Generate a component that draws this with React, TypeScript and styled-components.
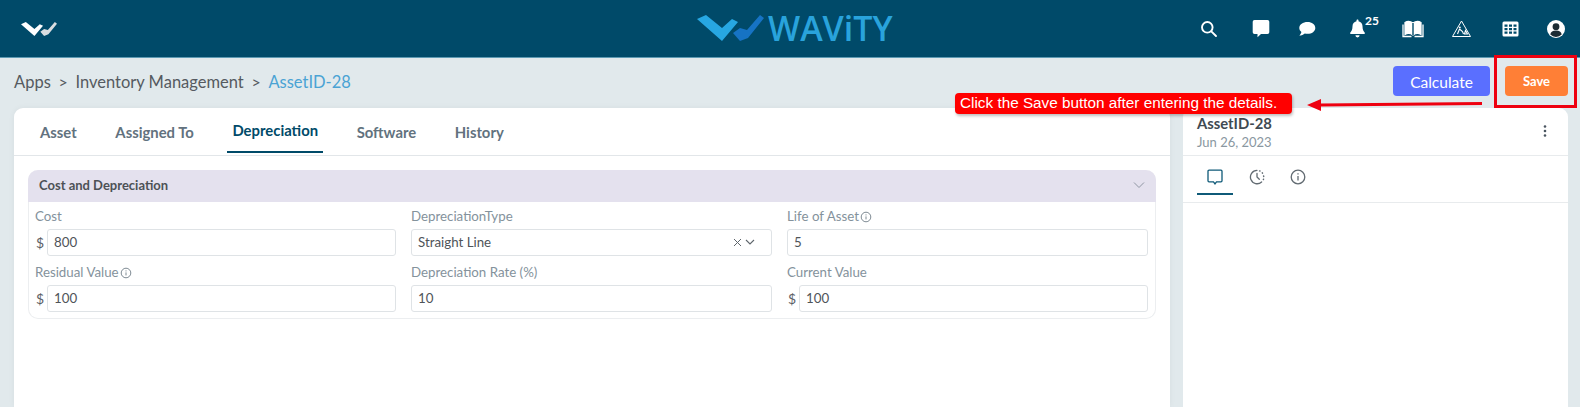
import React from "react";
import styled, { createGlobalStyle } from "styled-components";

const Global = createGlobalStyle`
  html, body { margin: 0; padding: 0; height: 100%; overflow: hidden; }
  body { background: #e1e9ec; font-family: Lato, "Open Sans", sans-serif; color: #4a4f55; }
  #root { height: 407px; }
`;

const Page = styled.div`
  position: relative;
  width: 1580px;
  height: 407px;
  overflow: hidden;
  display: flex;
  flex-direction: column;
`;

const Header = styled.header`
  flex: 0 0 58px;
  box-sizing: border-box;
  background: #004a69;
  border-bottom: 1px solid #5d9ab3;
  display: flex;
  align-items: center;
  padding: 0 0 0 21px;
  position: relative;
`;

const LogoCenter = styled.div`
  position: absolute;
  left: 697px;
  top: 15px;
  display: flex;
  align-items: center;
  gap: 4px;
  height: 26px;
`;

const LogoWord = styled.span`
  font-family: "Open Sans", sans-serif;
  font-size: 34px;
  font-weight: 600;
  line-height: 26px;
  color: #29a3dc;
`;

const HeaderIcons = styled.nav`
  margin-left: auto;
  display: flex;
  align-items: center;
`;

const IconSlot = styled.span<{ $w: number }>`
  position: relative;
  width: ${(p) => p.$w}px;
  display: flex;
  justify-content: center;
  align-items: center;
  height: 28px;
`;

const Badge = styled.span`
  position: absolute;
  left: 43px;
  top: -1px;
  font-size: 12px;
  line-height: 14px;
  font-weight: 700;
  color: #fff;
`;

const SubBar = styled.div`
  flex: 0 0 50px;
  display: flex;
  align-items: center;
  padding: 0 12px 4px 14px;
  box-sizing: border-box;
`;

const Crumbs = styled.div`
  display: flex;
  align-items: center;
  padding-top: 1px;
  font-size: 16.500px;
  color: #555a60;
`;

const Sep = styled.span`
  margin: 0 7.700px;
  font-size: 16px;
`;

const Current = styled.span`
  color: #4aa3d4;
`;

const Actions = styled.div`
  margin-left: auto;
  display: flex;
  gap: 15px;
`;

const Button = styled.button<{ $bg: string; $w: number; $bold?: boolean; $size: number; $pt: number }>`
  width: ${(p) => p.$w}px;
  height: 30px;
  border: 0;
  border-radius: 4px;
  background: ${(p) => p.$bg};
  color: #fff;
  font-family: Lato, sans-serif;
  font-size: ${(p) => p.$size}px;
  font-weight: ${(p) => (p.$bold ? 700 : 400)};
  padding: ${(p) => p.$pt}px 0 0;
`;

const Body = styled.div`
  flex: 1;
  display: flex;
  padding: 0 12px 0 14px;
  gap: 13px;
  min-height: 0;
`;

const MainCard = styled.section`
  flex: 0 0 1156px;
  background: #fff;
  border-radius: 9px 9px 0 0;
  box-shadow: 0 0 6px rgba(0, 0, 0, 0.05);
`;

const Tabs = styled.div`
  height: 48px;
  box-sizing: border-box;
  border-bottom: 1px solid #e2e6e9;
  display: flex;
  padding-left: 21px;
  gap: 28.600px;
`;

const Tab = styled.div<{ $active?: boolean }>`
  display: flex;
  align-items: center;
  height: 45px;
  box-sizing: border-box;
  padding: 3px 5px ${(p) => (p.$active ? "2px" : "0")};
  font-size: 14.850px;
  font-weight: 700;
  color: ${(p) => (p.$active ? "#004a69" : "#62727e")};
  border-bottom: ${(p) => (p.$active ? "2px solid #004a69" : "0")};
`;

const Accordion = styled.div`
  margin: 14px 14px 0 14px;
  border: 1px solid #eceef0;
  border-top: 0;
  border-radius: 10px;
  height: 149px;
  box-sizing: border-box;
`;

const AccordionHead = styled.div`
  height: 32px;
  margin: 0 -1px;
  background: #e4e1ee;
  border-radius: 10px 10px 0 0;
  display: flex;
  align-items: center;
  justify-content: space-between;
  padding: 0 11px 2px 11px;
  box-sizing: border-box;
  font-size: 13px;
  font-weight: 700;
  color: #4d5156;
`;

const Grid = styled.div`
  display: grid;
  grid-template-columns: repeat(3, 361px);
  column-gap: 15px;
  row-gap: 7px;
  padding: 5px 0 0 6px;
`;

const Field = styled.div`
  display: flex;
  flex-direction: column;
`;

const Label = styled.label`
  font-size: 13.300px;
  line-height: 19px;
  height: 22px;
  color: #84929c;
  display: flex;
  align-items: flex-start;
  gap: 1px;
`;

const InfoWrap = styled.span`
  display: flex;
  margin-top: 4px;
`;

const InputRow = styled.div`
  display: flex;
  align-items: center;
`;

const Dollar = styled.span`
  width: 12px;
  padding-left: 1px;
  box-sizing: border-box;
  font-size: 14px;
  color: #5b6066;
`;

const Input = styled.div`
  flex: 1;
  height: 27px;
  box-sizing: border-box;
  border: 1px solid #dfe3e6;
  border-radius: 3px;
  padding: 0 5px 1px 6px;
  font-size: 13.300px;
  color: #4f5459;
  display: flex;
  align-items: center;
`;

const SelectTools = styled.span`
  margin-left: auto;
  display: flex;
  align-items: center;
  gap: 3px;
  margin-right: 11px;
`;

const Side = styled.aside`
  flex: 1;
  background: #fff;
  border-radius: 9px 9px 0 0;
  display: flex;
  flex-direction: column;
`;

const SideHead = styled.div`
  height: 48px;
  box-sizing: border-box;
  padding: 6px 0 0 14px;
  border-bottom: 1px solid #e8ebed;
  position: relative;
`;

const SideTitle = styled.div`
  font-size: 14.800px;
  font-weight: 700;
  line-height: 18px;
  color: #3f4a52;
`;

const SideDate = styled.div`
  font-size: 13px;
  line-height: 20px;
  color: #8a97a1;
`;

const Kebab = styled.span`
  position: absolute;
  right: 21px;
  top: 17px;
  display: flex;
`;

const SideTabs = styled.div`
  height: 47px;
  box-sizing: border-box;
  border-bottom: 1px solid #e8ebed;
  padding-left: 14px;
  display: flex;
  gap: 5.500px;
`;

const SideTab = styled.div<{ $active?: boolean }>`
  width: 36px;
  height: 39px;
  display: flex;
  align-items: center;
  justify-content: center;
  padding-top: 5px;
  box-sizing: border-box;
  border-bottom: ${(p) => (p.$active ? "2px solid #0f5a78" : "2px solid transparent")};
`;

const Note = styled.div`
  position: absolute;
  left: 955px;
  top: 93px;
  width: 337px;
  height: 21px;
  box-sizing: border-box;
  background: #ff0000;
  border-radius: 4px;
  box-shadow: 1px 2px 3px rgba(0, 0, 0, 0.25);
  color: #fff;
  font-family: "Liberation Sans", Arial, sans-serif;
  font-size: 15.300px;
  line-height: 20px;
  padding-left: 5px;
  white-space: nowrap;
`;

const Highlight = styled.div`
  position: absolute;
  left: 1494px;
  top: 55px;
  width: 83px;
  height: 53px;
  box-sizing: border-box;
  border: 3px solid #ee0010;
`;

const ArrowSvg = styled.svg`
  position: absolute;
  left: 1304px;
  top: 95px;
`;

const Info = () => (
  <InfoWrap>
    <svg width="12" height="12" viewBox="0 0 12 12" fill="none" stroke="#6f7d87" strokeWidth="0.9">
      <circle cx="6" cy="6" r="4.800" />
      <path d="M6 5.400v3M6 3.400v1" />
    </svg>
  </InfoWrap>
);

const Check = ({ a, b, w, h }: { a: string; b: string; w: number; h: number }) => (
  <svg width={w} height={h} viewBox="0 0 67 26">
    <path d="M0 4 L9 0 L25 13 L35 4 L41 7 L25 26 Z" fill={a} />
    <path d="M36 18 L43 13 L50 15 L63 0 L67 3 L51 23 L43 26 Z" fill={b} />
  </svg>
);

const W = "#fff";

const iconsTop = [
  <svg key="s" width="18" height="18" viewBox="0 0 18 18" fill="none" stroke={W} strokeWidth="1.900"><circle cx="7.300" cy="7.300" r="5.300" /><path d="M11.300 11.300 16 16" strokeLinecap="round" /></svg>,
  <svg key="c" width="18" height="19" viewBox="0 0 18 19" fill={W}><path d="M2.500 1h13A1.800 1.800 0 0 1 17.300 2.800v10.400A1.800 1.800 0 0 1 15.500 15H9l-3.500 3.200V15h-3A1.800 1.800 0 0 1 .7 13.200V2.800A1.800 1.800 0 0 1 2.500 1Z" /></svg>,
  <svg key="m" width="18" height="16" viewBox="0 0 18 16" fill={W}><path d="M9.500 1C13.900 1 17.300 3.500 17.300 6.900S13.900 12.800 9.500 12.800c-1 0-1.900-.1-2.700-.4C5.500 13.500 3.500 14.600 1.200 14.600c1-.9 1.900-2.200 2.200-3.700C2 9.800 1.300 8.400 1.300 6.900 1.300 3.500 5 1 9.500 1Z" /></svg>,
  <svg key="b" width="15" height="19" viewBox="0 0 15 19" fill={W}><path d="M7.500 .5c.6 0 1 .4 1 1v.7c2.500.5 4 2.600 4 5.100 0 3.700 1 4.900 2.300 6.400.3.500.1 1.300-.7 1.300H.9c-.8 0-1-.8-.7-1.300C1.500 12.200 2.500 11 2.500 7.300c0-2.500 1.500-4.600 4-5.100v-.7c0-.6.400-1 1-1Z" /><path d="M5.400 16.300h4.200a2.100 2.100 0 0 1-4.200 0Z" /></svg>,
  <svg key="o" width="22" height="18" viewBox="0 0 22 18" fill="none" stroke={W} strokeWidth="1.300"><path d="M3 2.500C5.500 1 8.500 1.300 11 3c2.500-1.700 5.500-2 8-.5v12C16.500 13 13.500 13.300 11 15c-2.500-1.700-5.500-2-8-.5Z" fill={W} /><path d="M11 3v12" stroke="#004a69" strokeWidth="1.400" /><path d="M1 4.500v12h8.500M21 4.500v12h-8.500" /></svg>,
  <svg key="t" width="21" height="18" viewBox="0 0 20 18" fill="none" stroke={W} strokeWidth="1"><path d="M10 1 19 16.500H1Z" strokeLinejoin="round" /><circle cx="8.300" cy="7.500" r="1" fill={W} stroke="none" /><path d="M8 9l-2 5M8 9l3 2.500 1 2.500M13 14h3l-2-3.500Z" strokeWidth="1.100" /></svg>,
  <svg key="g" width="17" height="16" viewBox="0 0 17 16" fill={W}><path fillRule="evenodd" d="M2 .5h13A1.500 1.500 0 0 1 16.500 2v12a1.500 1.500 0 0 1-1.500 1.500H2A1.500 1.500 0 0 1 .5 14V2A1.500 1.500 0 0 1 2 .5ZM2.500 3.500v2.300h3V3.500Zm4.500 0v2.300h3V3.500Zm4.500 0v2.300h3V3.500ZM2.500 7v2.300h3V7ZM7 7v2.300h3V7Zm4.500 0v2.300h3V7ZM2.500 10.500v2.300h3v-2.300Zm4.500 0v2.300h3v-2.300Zm4.500 0v2.300h3v-2.300Z" /></svg>,
  <svg key="u" width="18" height="18" viewBox="0 0 18 18"><circle cx="9" cy="9" r="9" fill={W} /><circle cx="9" cy="6.700" r="3.400" fill="#1c2b33" /><path d="M3.300 14.500c.3-2.800 2.500-4 5.700-4s5.400 1.200 5.700 4a8 8 0 0 1-11.400 0Z" fill="#1c2b33" /></svg>,
];

export default function App() {
  const widths = [42, 62, 30, 70, 42, 54, 44, 48];
  return (
    <Page>
      <Global />
      <Header>
        <Check a="#fff" b="#d9dde0" w={36} h={14} />
        <LogoCenter>
          <Check a="#27a7e2" b="#1673c4" w={67} h={26} />
          <LogoWord>WAViTY</LogoWord>
        </LogoCenter>
        <HeaderIcons>
          {iconsTop.map((ic, i) => (
            <IconSlot key={i} $w={widths[i]}>
              {ic}
              {i === 3 && <Badge>25</Badge>}
            </IconSlot>
          ))}
        </HeaderIcons>
      </Header>
      <SubBar>
        <Crumbs>
          Apps<Sep>&gt;</Sep>Inventory Management<Sep>&gt;</Sep>
          <Current>AssetID-28</Current>
        </Crumbs>
        <Actions>
          <Button $bg="#5a6fff" $w={97} $size={15.500} $pt={2}>Calculate</Button>
          <Button $bg="#ff7f36" $w={63} $size={13} $pt={0} $bold>Save</Button>
        </Actions>
      </SubBar>
      <Body>
        <MainCard>
          <Tabs>
            <Tab>Asset</Tab>
            <Tab>Assigned To</Tab>
            <Tab $active>Depreciation</Tab>
            <Tab>Software</Tab>
            <Tab>History</Tab>
          </Tabs>
          <Accordion>
            <AccordionHead>
              Cost and Depreciation
              <svg width="12" height="8" viewBox="0 0 12 8" fill="none" stroke="#8f96a3" strokeWidth="1"><path d="M1 1.500 6 6.500 11 1.500" /></svg>
            </AccordionHead>
            <Grid>
              <Field>
                <Label>Cost</Label>
                <InputRow><Dollar>$</Dollar><Input>800</Input></InputRow>
              </Field>
              <Field>
                <Label>DepreciationType</Label>
                <InputRow>
                  <Input>
                    Straight Line
                    <SelectTools>
                      <svg width="9" height="9" viewBox="0 0 9 9" fill="none" stroke="#5f666c" strokeWidth="1"><path d="M1 1l7 7M8 1 1 8" /></svg>
                      <svg width="10" height="6" viewBox="0 0 10 6" fill="none" stroke="#5f666c" strokeWidth="1.100"><path d="M1 1l4 4 4-4" /></svg>
                    </SelectTools>
                  </Input>
                </InputRow>
              </Field>
              <Field>
                <Label>Life of Asset<Info /></Label>
                <InputRow><Input>5</Input></InputRow>
              </Field>
              <Field>
                <Label>Residual Value<Info /></Label>
                <InputRow><Dollar>$</Dollar><Input>100</Input></InputRow>
              </Field>
              <Field>
                <Label>Depreciation Rate (%)</Label>
                <InputRow><Input>10</Input></InputRow>
              </Field>
              <Field>
                <Label>Current Value</Label>
                <InputRow><Dollar>$</Dollar><Input>100</Input></InputRow>
              </Field>
            </Grid>
          </Accordion>
        </MainCard>
        <Side>
          <SideHead>
            <SideTitle>AssetID-28</SideTitle>
            <SideDate>Jun 26, 2023</SideDate>
            <Kebab>
              <svg width="4" height="12" viewBox="0 0 4 12" fill="#4a5560"><circle cx="2" cy="1.500" r="1.300" /><circle cx="2" cy="6" r="1.300" /><circle cx="2" cy="10.500" r="1.300" /></svg>
            </Kebab>
          </SideHead>
          <SideTabs>
            <SideTab $active>
              <svg width="16" height="16" viewBox="0 0 16 16" fill="none" stroke="#0f5a78" strokeWidth="1.300"><path d="M2 1.200h12a1 1 0 0 1 1 1v9.600a1 1 0 0 1-1 1H9.500L8 14.800 6.500 12.800H2a1 1 0 0 1-1-1V2.200a1 1 0 0 1 1-1Z" /></svg>
            </SideTab>
            <SideTab>
              <svg width="16" height="16" viewBox="0 0 16 16" fill="none" stroke="#626b72" strokeWidth="1.300" strokeLinecap="round"><path d="M8 1.300A6.700 6.700 0 1 0 12.600 13" /><path d="M8 4.500V8l2.300 2.300" /><path d="M10.600 1.900l.3.100M13.300 3.900l.2.300M14.600 7l.1.400M14.500 10.300l-.1.300" strokeWidth="1.500" /></svg>
            </SideTab>
            <SideTab>
              <svg width="16" height="16" viewBox="0 0 16 16" fill="none" stroke="#626b72" strokeWidth="1.300"><circle cx="8" cy="8" r="6.800" /><path d="M8 7v4.500M8 4.300v1.300" /></svg>
            </SideTab>
          </SideTabs>
        </Side>
      </Body>
      <Note>Click the Save button after entering the details.</Note>
      <ArrowSvg width="180" height="20" viewBox="0 0 180 20">
        <path d="M3 10 17 4 V8.500 L178 7 V10 L17 11.500 V16 Z" fill="#ee0010" />
      </ArrowSvg>
      <Highlight />
    </Page>
  );
}
